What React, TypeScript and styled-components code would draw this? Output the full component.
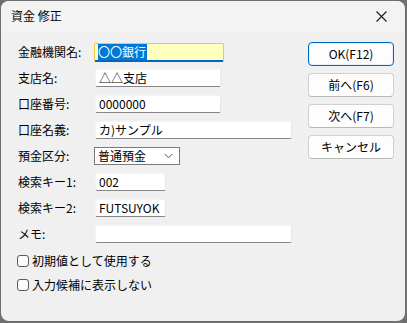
import React from 'react';
import styled, { createGlobalStyle } from 'styled-components';

const GlobalStyle = createGlobalStyle`
  html, body {
    margin: 0;
    padding: 0;
    background: #6f6f6f;
  }
  body {
    font-family: "Noto Sans CJK JP", "Noto Sans", sans-serif;
    font-size: 12px;
    color: #000;
  }
`;

const Window = styled.div`
  margin: 1px 0 0 1px;
  width: 404px;
  height: 320px;
  border-radius: 8px;
  overflow: hidden;
  background: #f0f0f0;
  display: flex;
  flex-direction: column;
`;

const TitleBar = styled.div`
  height: 30px;
  background: #f3f3f3;
  display: flex;
  align-items: center;
  justify-content: space-between;
  padding: 0 0 0 10px;
  flex-shrink: 0;
`;

const Title = styled.span`
  font-size: 12px;
  line-height: 1;
  margin-top: -1px;
`;

const CloseButton = styled.div`
  width: 46px;
  height: 30px;
  display: flex;
  align-items: center;
  justify-content: center;
  margin-right: 1px;
`;

const Body = styled.div`
  display: flex;
  padding: 8px 0 0 17px;
`;

const Form = styled.div`
  width: 290px;
  display: flex;
  flex-direction: column;
`;

const Row = styled.div`
  height: 26px;
  display: grid;
  grid-template-columns: 76px 1fr;
  align-items: center;
`;

const Label = styled.span`
  font-size: 12px;
  line-height: 1;
`;

const TextBox = styled.div<{ $width: number }>`
  width: ${({ $width }) => $width}px;
  height: 18px;
  box-sizing: border-box;
  background: #fff;
  border: 1px solid #e6e6e6;
  border-top-color: #f5f5f5;
  border-left-color: #f5f5f5;
  border-bottom: 1px solid #858585;
  border-radius: 2px;
  display: flex;
  align-items: center;
  padding: 0 0 0 3px;
  font-size: 12px;
  line-height: 1;
  margin-left: 1px;
`;

const FocusBox = styled.div<{ $width: number }>`
  width: ${({ $width }) => $width}px;
  height: 19px;
  box-sizing: border-box;
  background: #ffffbe;
  border: 1px solid #fac540;
  border-bottom: 2px solid #0067c0;
  border-radius: 2px;
  display: flex;
  align-items: center;
  padding: 0 0 0 3px;
  font-size: 12px;
  line-height: 1;
`;

const Selected = styled.span`
  background: #0078d7;
  color: #fff;
  padding: 2px 1px 2px 0;
`;

const Combo = styled.div`
  width: 86px;
  height: 18px;
  box-sizing: border-box;
  background: #fff;
  border: 1px solid #7a7a7a;
  display: flex;
  align-items: center;
  justify-content: space-between;
  padding: 0 6px 0 3px;
  font-size: 12px;
  line-height: 1;
`;

const CheckRow = styled.label`
  height: 24px;
  display: flex;
  align-items: center;
  gap: 3px;
  font-size: 12px;
  line-height: 1;
  margin-left: -1px;
`;

const CheckBox = styled.span`
  width: 12px;
  height: 12px;
  box-sizing: border-box;
  border: 1px solid #5a5a5a;
  border-radius: 3px;
  background: #fbfbfb;
`;

const Checks = styled.div`
  display: flex;
  flex-direction: column;
  padding-top: 2px;
`;

const Buttons = styled.div`
  display: flex;
  flex-direction: column;
  gap: 7px;
  padding-top: 3px;
`;

const Button = styled.div<{ $primary?: boolean }>`
  width: 86px;
  height: 24px;
  box-sizing: border-box;
  border-radius: 4px;
  background: #fdfdfd;
  border: 1px solid ${({ $primary }) => ($primary ? '#0067c0' : '#d0d0d0')};
  border-bottom-color: ${({ $primary }) => ($primary ? '#0067c0' : '#b8b8b8')};
  ${({ $primary }) => ($primary ? 'box-shadow: inset 0 0 0 1px #e6f0fa;' : '')}
  display: flex;
  align-items: center;
  justify-content: center;
  font-size: 12px;
  line-height: 1;
`;

const Chevron = () => (
  <svg width="9" height="6" viewBox="0 0 9 6">
    <path d="M0.5 0.8 L4.5 4.8 L8.5 0.8" fill="none" stroke="#555" strokeWidth="1" />
  </svg>
);

const CloseIcon = () => (
  <svg width="11" height="11" viewBox="0 0 11 11">
    <path d="M0.5 0.5 L10.5 10.5 M10.5 0.5 L0.5 10.5" stroke="#1a1a1a" strokeWidth="1.1" />
  </svg>
);

const fields = [
  { label: '支店名:', value: '△△支店', width: 126 },
  { label: '口座番号:', value: '0000000', width: 126 },
  { label: '口座名義:', value: 'カ)サンプル', width: 197 },
];

const keys = [
  { label: '検索キー1:', value: '002', width: 71 },
  { label: '検索キー2:', value: 'FUTSUYOK', width: 71 },
  { label: 'メモ:', value: '', width: 197 },
];

export default function App() {
  return (
    <>
      <GlobalStyle />
      <Window>
        <TitleBar>
          <Title>資金 修正</Title>
          <CloseButton>
            <CloseIcon />
          </CloseButton>
        </TitleBar>
        <Body>
          <Form>
            <Row>
              <Label>金融機関名:</Label>
              <FocusBox $width={130}>
                <Selected>〇〇銀行</Selected>
              </FocusBox>
            </Row>
            {fields.map((f) => (
              <Row key={f.label}>
                <Label>{f.label}</Label>
                <TextBox $width={f.width}>{f.value}</TextBox>
              </Row>
            ))}
            <Row>
              <Label>預金区分:</Label>
              <Combo>
                <span>普通預金</span>
                <Chevron />
              </Combo>
            </Row>
            {keys.map((f) => (
              <Row key={f.label}>
                <Label>{f.label}</Label>
                <TextBox $width={f.width}>{f.value}</TextBox>
              </Row>
            ))}
            <Checks>
              <CheckRow>
                <CheckBox />
                初期値として使用する
              </CheckRow>
              <CheckRow>
                <CheckBox />
                入力候補に表示しない
              </CheckRow>
            </Checks>
          </Form>
          <Buttons>
            <Button $primary>OK(F12)</Button>
            <Button>前へ(F6)</Button>
            <Button>次へ(F7)</Button>
            <Button>キャンセル</Button>
          </Buttons>
        </Body>
      </Window>
    </>
  );
}
